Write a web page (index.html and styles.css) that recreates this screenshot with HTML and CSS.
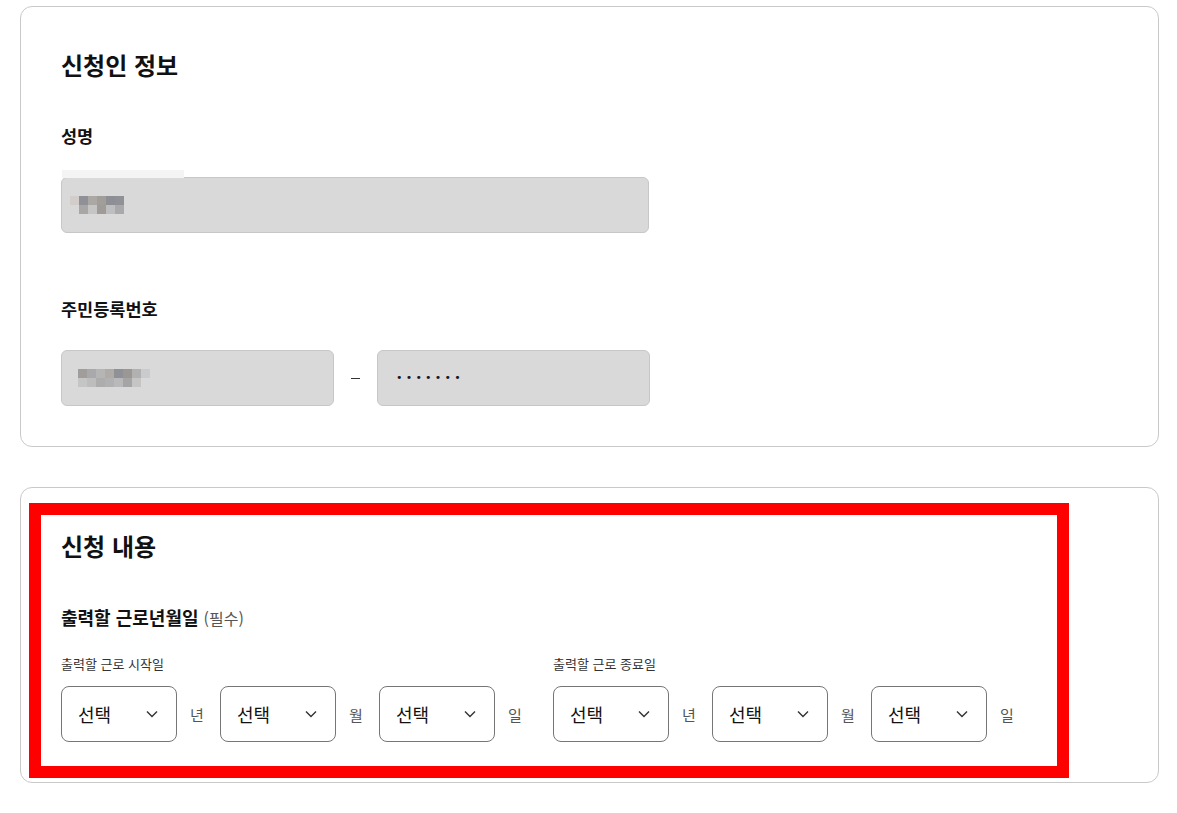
FILE: index.html
```html
<!DOCTYPE html>
<html lang="ko">
  <head>
    <meta charset="UTF-8" />
    <meta name="viewport" content="width=device-width, initial-scale=1.0" />
    <link rel="stylesheet" href="styles.css">
    <title>신청서</title>
  </head>
  <body>
    <div class="page">
      <section class="card">
        <h2 class="card-title">신청인 정보</h2>
        <div class="field">
          <div class="field-label">성명</div>
          <div class="input input-name">
            <span class="blur-strip"></span>
            <div class="mosaic">
              <div class="mosaic-row">
                <i style="background:#d2cdca"></i><i style="background:#8f9197"></i><i style="background:#aba7a5"></i><i style="background:#a19d99"></i><i style="background:#8e8f95"></i><i style="background:#909197"></i>
              </div>
              <div class="mosaic-row">
                <i style="background:#d8d8d8"></i><i style="background:#a9a7a5"></i><i style="background:#c5c5c5"></i><i style="background:#9f9b99"></i><i style="background:#bebec1"></i><i style="background:#a9a9ab"></i>
              </div>
            </div>
          </div>
        </div>
        <div class="field field-id">
          <div class="field-label">주민등록번호</div>
          <div class="id-row">
            <div class="input input-half">
              <div class="mosaic">
                <div class="mosaic-row">
                  <i style="background:#a19d9b"></i><i style="background:#a9a9ab"></i><i style="background:#b5b5b5"></i><i style="background:#afaba9"></i><i style="background:#8f9197"></i><i style="background:#9b9795"></i><i style="background:#b1b1b1"></i><i style="background:#c9cbcd"></i>
                </div>
                <div class="mosaic-row">
                  <i style="background:#c5c5c5"></i><i style="background:#bdbdbd"></i><i style="background:#adadad"></i><i style="background:#b1b1b1"></i><i style="background:#b9b9bb"></i><i style="background:#a5a5a5"></i><i style="background:#c5c5c5"></i>
                </div>
              </div>
            </div>
            <span class="dash"><i></i></span>
            <div class="input input-half">
              <span class="dots">•••••••</span>
            </div>
          </div>
        </div>
      </section>

      <section class="card card-request">
        <h2 class="card-title">신청 내용</h2>
        <div class="sub-title">출력할 근로년월일 <span class="required">(필수)</span></div>
        <div class="date-range">
          <div class="date-group">
            <div class="date-label">출력할 근로 시작일</div>
            <div class="date-selects">
              <div class="select"><span>선택</span><svg class="chevron" width="12" height="8" viewBox="0 0 12 8"><path d="M1 1.5l5 5 5-5" fill="none" stroke="#333" stroke-width="1.4"/></svg></div>
              <span class="unit">년</span>
              <div class="select"><span>선택</span><svg class="chevron" width="12" height="8" viewBox="0 0 12 8"><path d="M1 1.5l5 5 5-5" fill="none" stroke="#333" stroke-width="1.4"/></svg></div>
              <span class="unit">월</span>
              <div class="select"><span>선택</span><svg class="chevron" width="12" height="8" viewBox="0 0 12 8"><path d="M1 1.5l5 5 5-5" fill="none" stroke="#333" stroke-width="1.4"/></svg></div>
              <span class="unit">일</span>
            </div>
          </div>
          <div class="date-group">
            <div class="date-label">출력할 근로 종료일</div>
            <div class="date-selects">
              <div class="select"><span>선택</span><svg class="chevron" width="12" height="8" viewBox="0 0 12 8"><path d="M1 1.5l5 5 5-5" fill="none" stroke="#333" stroke-width="1.4"/></svg></div>
              <span class="unit">년</span>
              <div class="select"><span>선택</span><svg class="chevron" width="12" height="8" viewBox="0 0 12 8"><path d="M1 1.5l5 5 5-5" fill="none" stroke="#333" stroke-width="1.4"/></svg></div>
              <span class="unit">월</span>
              <div class="select"><span>선택</span><svg class="chevron" width="12" height="8" viewBox="0 0 12 8"><path d="M1 1.5l5 5 5-5" fill="none" stroke="#333" stroke-width="1.4"/></svg></div>
              <span class="unit">일</span>
            </div>
          </div>
        </div>
        <div class="highlight"></div>
      </section>
    </div>
  </body>
</html>
```

FILE: styles.css
```css
* {
  box-sizing: border-box;
}
body {
  margin: 0;
  background: #fff;
  color: #111;
  font-family: "Noto Sans CJK KR", "Noto Sans", sans-serif;
}
.page {
  padding: 6px 18px 0 20px;
}
.card {
  position: relative;
  border: 1px solid #c9c9c9;
  border-radius: 12px;
  padding: 38px 40px 40px;
  margin-bottom: 40px;
}
.card-title {
  margin: 0;
  font-size: 24px;
  line-height: 40px;
  font-weight: 700;
  color: #111;
}
.field {
  margin-top: 38px;
}
.field-id {
  margin-top: 63px;
}
.field-label {
  font-size: 17.5px;
  font-weight: 700;
  line-height: 26px;
  margin-bottom: 28px;
}
.input {
  position: relative;
  height: 56px;
  background: #d9d9d9;
  border: 1px solid #c7c7c7;
  border-radius: 6px;
  display: flex;
  align-items: center;
  padding-left: 18px;
}
.input-name {
  width: 588px;
  padding-left: 8px;
}
.blur-strip {
  position: absolute;
  left: 0;
  top: -8px;
  width: 122px;
  height: 8px;
  background: #f4f4f4;
}
.mosaic-row {
  display: flex;
  height: 9px;
}
.mosaic-row i {
  display: block;
  width: 9px;
  height: 9px;
}
.input-half .mosaic {
  margin-left: -2px;
}
.id-row {
  display: flex;
  align-items: center;
}
.input-half {
  width: 273px;
}
.dash {
  width: 43px;
  display: flex;
  justify-content: center;
}
.dash i {
  display: block;
  width: 9px;
  height: 1px;
  background: #333;
}
.dots {
  font-family: "DejaVu Sans", sans-serif;
  font-size: 11px;
  letter-spacing: 3.2px;
  color: #15182b;
  margin-top: -2px;
}
.card-request {
  padding-top: 38px;
}
.sub-title {
  margin-top: 38px;
  font-size: 18px;
  font-weight: 700;
  line-height: 26px;
}
.required {
  font-size: 16px;
  font-weight: 400;
  color: #555;
}
.date-range {
  display: flex;
  gap: 15px;
  margin-top: 23px;
}
.date-label {
  font-size: 13px;
  line-height: 20px;
  color: #333;
  margin-bottom: 12px;
}
.date-selects {
  display: flex;
  align-items: center;
}
.select {
  width: 116px;
  height: 56px;
  border: 1px solid #767676;
  border-radius: 8px;
  display: flex;
  align-items: center;
  justify-content: space-between;
  padding: 0 18px 0 16px;
  font-size: 18px;
  color: #111;
}
.unit {
  width: 43px;
  padding-left: 13px;
  font-size: 15px;
  color: #555;
}
.highlight {
  position: absolute;
  left: 8px;
  top: 15px;
  width: 1040px;
  height: 275px;
  border: 12px solid #ff0000;
  pointer-events: none;
}
```
